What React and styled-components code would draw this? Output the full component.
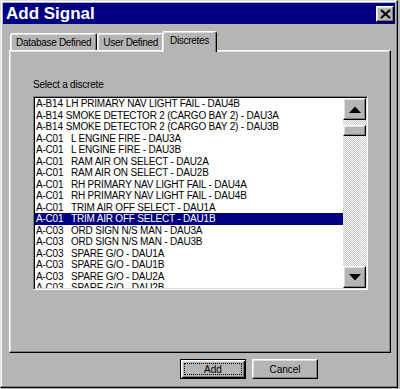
import React from 'react';
import styled, { createGlobalStyle, css } from 'styled-components';

const GRAY = '#b5b5b5';
const NAVY = '#000080';

const Global = createGlobalStyle`
  html, body { margin: 0; padding: 0; background: ${GRAY}; }
  body { font-family: "Liberation Sans", Arial, sans-serif; }
  * { box-sizing: border-box; }
`;

const raised = css`
  border: 1px solid;
  border-color: #fff #000 #000 #fff;
  box-shadow: inset -1px -1px #808080, inset 1px 1px #dfdfdf;
  background: ${GRAY};
`;

const Window = styled.div`
  width: 398px;
  height: 388px;
  background: ${GRAY};
  border: 1px solid;
  border-color: #dfdfdf #000 #000 #dfdfdf;
  box-shadow: inset -1px -1px #808080, inset 1px 1px #fff;
  padding: 2px;
  display: flex;
  flex-direction: column;
`;

const TitleBar = styled.div`
  height: 21px;
  flex: none;
  background: ${NAVY};
  display: flex;
  align-items: center;
  justify-content: space-between;
  padding: 0 1px 0 3px;
`;

const Title = styled.span`
  color: #fff;
  font-weight: bold;
  font-size: 17px;
  line-height: 21px;
`;

const CloseButton = styled.div`
  ${raised};
  width: 18px;
  height: 16px;
  display: flex;
  align-items: center;
  justify-content: center;
`;

const TabRow = styled.div`
  margin-top: 7px;
  height: 19px;
  flex: none;
  display: flex;
  align-items: flex-end;
  padding-left: 7px;
`;

const Tab = styled.div`
  height: ${(p) => (p.$active ? '21px' : '17px')};
  margin: ${(p) => (p.$active ? '0 -2px -2px -2px' : '0')};
  padding: ${(p) => (p.$active ? '0 7px 3px 7px' : '0 5px')};
  position: relative;
  z-index: ${(p) => (p.$active ? 1 : 0)};
  background: ${GRAY};
  border: 1px solid;
  border-bottom: none;
  border-color: #fff #000 transparent #fff;
  border-radius: 3px 3px 0 0;
  box-shadow: inset -1px 0 #808080, inset 1px 1px #dfdfdf;
  display: flex;
  align-items: center;
  font-size: 10px;
  letter-spacing: -0.3px;
  color: #000;
  white-space: nowrap;
`;

const Panel = styled.div`
  height: 303px;
  flex: none;
  margin: 0 4px 0 6px;
  border: 1px solid;
  border-color: #fff #000 #000 #fff;
  box-shadow: inset -1px -1px #808080, inset 1px 1px #dfdfdf;
  padding: 28px 0 0 23px;
  display: flex;
  flex-direction: column;
`;

const Label = styled.div`
  font-size: 10px;
  line-height: 12px;
  height: 12px;
  margin-bottom: 5px;
  letter-spacing: -0.2px;
  color: #000;
`;

const ListBox = styled.div`
  width: 335px;
  height: 194px;
  border: 1px solid;
  border-color: #808080 #fff #fff #808080;
  box-shadow: inset 1px 1px #000, inset -1px -1px #dfdfdf;
  padding: 1px;
  background: #fff;
  display: flex;
`;

const Rows = styled.div`
  flex: 1;
  overflow: hidden;
  background: #fff;
`;

const Row = styled.div`
  height: 11.5px;
  line-height: 11.5px;
  font-size: 10px;
  letter-spacing: -0.2px;
  padding-left: 1px;
  white-space: nowrap;
  color: ${(p) => (p.$selected ? '#fff' : '#000')};
  background: ${(p) => (p.$selected ? NAVY : 'transparent')};
`;

const Code = styled.span`
  display: inline-block;
  width: ${(p) => (p.$tab ? '35px' : 'auto')};
  margin-right: ${(p) => (p.$tab ? '0' : '3px')};
`;

const ScrollBar = styled.div`
  width: 23px;
  flex: none;
  display: flex;
  flex-direction: column;
`;

const ScrollButton = styled.div`
  ${raised};
  height: 22px;
  flex: none;
  display: flex;
  align-items: center;
  justify-content: center;
`;

const Track = styled.div`
  flex: 1;
  background: repeating-conic-gradient(#ffffff 0 25%, #c4c4c4 0 50%) 0 0 / 2px 2px;
  padding-top: 5px;
`;

const Thumb = styled.div`
  ${raised};
  height: 11px;
`;

const ButtonRow = styled.div`
  margin-top: 6px;
  display: flex;
  justify-content: flex-end;
  gap: 6px;
  padding-right: 77px;
`;

const Button = styled.div`
  width: 66px;
  height: 20px;
  font-size: 10px;
  color: #000;
  background: ${GRAY};
  display: flex;
  align-items: center;
  justify-content: center;
  ${(p) =>
    p.$default
      ? css`
          border: 1px solid #000;
          box-shadow: inset 1px 1px #fff, inset -1px -1px #000, inset 2px 2px #dfdfdf, inset -2px -2px #808080;
          padding: 3px;
        `
      : css`
          border: 1px solid;
          border-color: #fff #000 #000 #fff;
          box-shadow: inset -1px -1px #808080, inset 1px 1px #dfdfdf;
        `}
`;

const FocusRing = styled.span`
  flex: 1;
  align-self: stretch;
  border: 1px dotted #000;
  display: flex;
  align-items: center;
  justify-content: center;
`;

const Arrow = ({ down }) => (
  <svg width="12" height="7" viewBox="0 0 12 7">
    <polygon points={down ? '0,0 12,0 6,6.5' : '6,0.5 12,7 0,7'} fill="#000" />
  </svg>
);

const CloseX = () => (
  <svg width="11" height="10" viewBox="0 0 11 10">
    <path d="M1 1 L10 9 M10 1 L1 9" stroke="#000" strokeWidth="2" />
  </svg>
);

const items = [
  ['A-B14', 'LH PRIMARY NAV LIGHT FAIL - DAU4B', false],
  ['A-B14', 'SMOKE DETECTOR 2 (CARGO BAY 2) - DAU3A', false],
  ['A-B14', 'SMOKE DETECTOR 2 (CARGO BAY 2) - DAU3B', false],
  ['A-C01', 'L ENGINE FIRE - DAU3A', true],
  ['A-C01', 'L ENGINE FIRE - DAU3B', true],
  ['A-C01', 'RAM AIR ON SELECT - DAU2A', true],
  ['A-C01', 'RAM AIR ON SELECT - DAU2B', true],
  ['A-C01', 'RH PRIMARY NAV LIGHT FAIL - DAU4A', true],
  ['A-C01', 'RH PRIMARY NAV LIGHT FAIL - DAU4B', true],
  ['A-C01', 'TRIM AIR OFF SELECT - DAU1A', true],
  ['A-C01', 'TRIM AIR OFF SELECT - DAU1B', true],
  ['A-C03', 'ORD SIGN N/S MAN - DAU3A', true],
  ['A-C03', 'ORD SIGN N/S MAN - DAU3B', true],
  ['A-C03', 'SPARE G/O - DAU1A', true],
  ['A-C03', 'SPARE G/O - DAU1B', true],
  ['A-C03', 'SPARE G/O - DAU2A', true],
  ['A-C03', 'SPARE G/O - DAU2B', true],
];

export default function App() {
  return (
    <>
      <Global />
      <Window>
        <TitleBar>
          <Title>Add Signal</Title>
          <CloseButton>
            <CloseX />
          </CloseButton>
        </TitleBar>
        <TabRow>
          <Tab>Database Defined</Tab>
          <Tab>User Defined</Tab>
          <Tab $active>Discretes</Tab>
        </TabRow>
        <Panel>
          <Label>Select a discrete</Label>
          <ListBox>
            <Rows>
              {items.map(([code, label, tab], i) => (
                <Row key={i} $selected={i === 10}>
                  <Code $tab={tab}>{code}</Code>
                  {label}
                </Row>
              ))}
            </Rows>
            <ScrollBar>
              <ScrollButton>
                <Arrow />
              </ScrollButton>
              <Track>
                <Thumb />
              </Track>
              <ScrollButton>
                <Arrow down />
              </ScrollButton>
            </ScrollBar>
          </ListBox>
        </Panel>
        <ButtonRow>
          <Button $default>
            <FocusRing>Add</FocusRing>
          </Button>
          <Button>Cancel</Button>
        </ButtonRow>
      </Window>
    </>
  );
}
